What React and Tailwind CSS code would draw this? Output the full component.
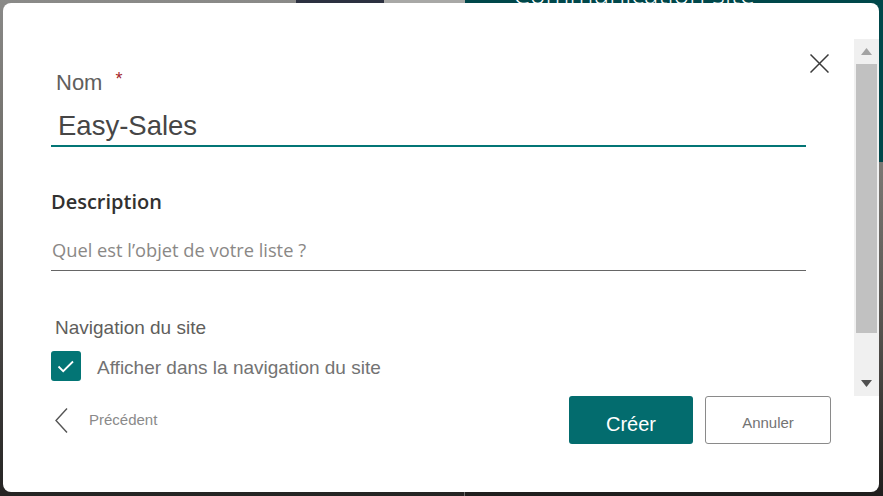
import React from 'react'

const arial = { fontFamily: '"Liberation Sans", Arial, sans-serif' }
const segoe = { fontFamily: '"Open Sans", "Noto Sans", sans-serif' }

const Backdrop = () => (
  <div className="absolute inset-0 grid grid-cols-[465px_1fr]">
    <div className="relative bg-[linear-gradient(to_bottom,#8a8a88_0%,#6d6b66_35%,#454341_70%,#252423_100%)] border-r border-[#6b6b6b]">
      <div className="absolute top-0 left-[296px] w-[88px] h-[12px] bg-[#2c3140]" />
      <div className="absolute top-0 left-[384px] w-[81px] h-[12px] bg-[#a8a8a6]" />
    </div>
    <div className="flex flex-col">
      <div className="h-[162px] bg-[#00474a] overflow-hidden">
        <div className="mt-[-21px] ml-[48px] text-[27px] leading-[30px] font-light text-white whitespace-nowrap" style={segoe}>
          Communication site
        </div>
      </div>
      <div className="flex-1 bg-[linear-gradient(to_bottom,#7b7874_0%,#55524e_50%,#1f1e1d_100%)]" />
    </div>
  </div>
)

const Scrollbar = () => (
  <div className="w-[25px] bg-[#f0f0f0] flex flex-col items-center">
    <div className="h-[25px] flex items-center justify-center">
      <svg width="11" height="7" viewBox="0 0 11 7"><path d="M5.5 0 L11 7 L0 7 Z" fill="#a3a3a3" /></svg>
    </div>
    <div className="w-[21px] h-[269px] bg-[#c1c1c1]" />
    <div className="flex-1" />
    <div className="h-[25px] flex items-center justify-center">
      <svg width="11" height="7" viewBox="0 0 11 7"><path d="M0 0 L11 0 L5.5 7 Z" fill="#505050" /></svg>
    </div>
  </div>
)

const Form = () => (
  <div className="w-[755px] flex flex-col">
    <div className="mt-[33px] ml-[5px] flex items-start text-[22px] leading-[22px] text-[#605e5c]" style={arial}>
      Nom
      <span className="ml-[13px] mt-[-4px] text-[18px] text-[#a4262c]">*</span>
    </div>
    <div className="mt-[18px] pl-[7px] pb-[6px] border-b-2 border-[#037575]">
      <div className="text-[27.5px] leading-[27px] text-[#464646]" style={arial}>Easy-Sales</div>
    </div>

    <div className="mt-[45px] text-[20px] leading-[20px] font-semibold text-[#323130]" style={segoe}>
      Description
    </div>
    <div className="mt-[28px] pl-[1px] pb-[11px] border-b border-[#666666]">
      <div className="text-[18.3px] leading-[19px] text-[#8a8886]" style={segoe}>
        Quel est l’objet de votre liste ?
      </div>
    </div>

    <div className="mt-[47px] ml-[4px] text-[19px] leading-[19px] text-[#605e5c]" style={arial}>
      Navigation du site
    </div>
    <div className="mt-[14px] flex items-start">
      <div className="w-[30px] h-[30px] rounded-[3px] bg-[#037575] flex items-center justify-center">
        <svg width="30" height="30" viewBox="0 0 30 30">
          <path d="M7.5 15.5 L12.2 20.2 L22 10.5" fill="none" stroke="#ffffff" strokeWidth="1.8" />
        </svg>
      </div>
      <div className="ml-[16px] mt-[7px] text-[19px] leading-[19px] text-[#737373]" style={arial}>
        Afficher dans la navigation du site
      </div>
    </div>
  </div>
)

export default function App() {
  return (
    <div className="relative w-[883px] h-[496px] overflow-hidden pt-[3px] pl-[3px] pr-[4px] pb-[4px]">
      <Backdrop />
      <div className="relative h-full bg-white rounded-[8px] flex flex-col">
        <div className="mt-[36px] h-[357px] flex">
          <div className="pl-[48px] flex">
            <Form />
            <div className="ml-[4px] mt-[15px]">
              <svg width="19" height="19" viewBox="0 0 19 19">
                <path d="M0.5 0.5 L18.5 18.5 M18.5 0.5 L0.5 18.5" stroke="#3b3b3b" strokeWidth="1.5" />
              </svg>
            </div>
          </div>
          <div className="flex-1" />
          <Scrollbar />
        </div>
        <div className="flex pl-[52px] pr-[48px]">
          <div className="flex items-start">
            <svg className="mt-[12px]" width="13" height="25" viewBox="0 0 13 25">
              <path d="M12 0.5 L1 12.5 L12 24.5" fill="none" stroke="#555555" strokeWidth="1.4" />
            </svg>
            <div className="ml-[21px] mt-[16px] text-[15px] leading-[15px] text-[#8a8a8a]" style={arial}>
              Précédent
            </div>
          </div>
          <div className="flex-1" />
          <div className="flex gap-[12px]">
            <button className="w-[124px] h-[48px] rounded-[3px] bg-[#036c6e] text-white text-[20px] pt-[8px]" style={arial}>
              Créer
            </button>
            <button className="w-[126px] h-[48px] rounded-[3px] border border-[#8a8a8a] bg-white text-[#737373] text-[15px] pt-[6px]" style={arial}>
              Annuler
            </button>
          </div>
        </div>
      </div>
    </div>
  )
}
